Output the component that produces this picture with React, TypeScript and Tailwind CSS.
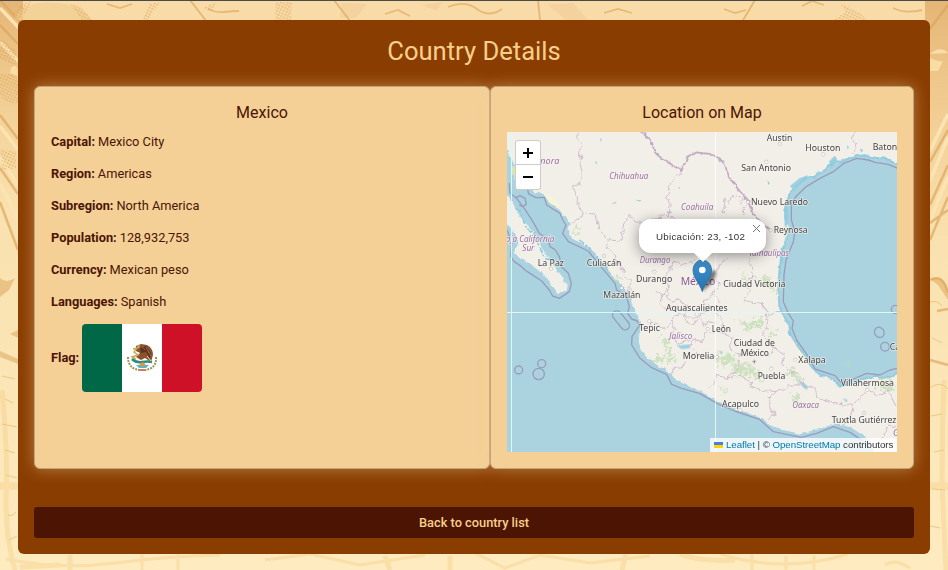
import React from "react";

type Place = { t: string; x: number; y: number; w: number; region?: boolean; dot?: [number, number] };

// Map drawing units are thirds of a pixel.
const places: Place[] = [
  { t: "Chihuahua", x: 328, y: 162, w: 117, region: true },
  { t: "Sonora", x: 92, y: 117, w: 86, region: true },
  { t: "Baja California", x: 3, y: 350, w: 160, region: true },
  { t: "Sur", x: 67, y: 379, w: 36, region: true },
  { t: "Coahuila", x: 543, y: 254, w: 97, region: true },
  { t: "Durango", x: 419, y: 413, w: 92, region: true },
  { t: "Tamaulipas", x: 746, y: 392, w: 121, region: true },
  { t: "Jalisco", x: 508, y: 643, w: 69, region: true },
  { t: "Oaxaca", x: 877, y: 849, w: 80, region: true },
  { t: "Austin", x: 800, y: 47, w: 77, dot: [839, 57] },
  { t: "Houston", x: 916, y: 78, w: 105, dot: [970, 88] },
  { t: "Baton Rouge", x: 1118, y: 74, w: 160 },
  { t: "San Antonio", x: 724, y: 138, w: 149, dot: [799, 110] },
  { t: "Nuevo Laredo", x: 753, y: 239, w: 171, dot: [744, 231] },
  { t: "Reynosa", x: 821, y: 325, w: 102, dot: [812, 316] },
  { t: "La Paz", x: 113, y: 422, w: 79, dot: [153, 431] },
  { t: "Culiacán", x: 260, y: 424, w: 104, dot: [312, 393] },
  { t: "Durango", x: 408, y: 470, w: 109, dot: [463, 440] },
  { t: "Mazatlán", x: 310, y: 519, w: 111, dot: [365, 489] },
  { t: "Ciudad Victoria", x: 670, y: 487, w: 186, dot: [763, 458] },
  { t: "Aguascalientes", x: 498, y: 557, w: 185, dot: [590, 568] },
  { t: "Tepic", x: 417, y: 619, w: 63, dot: [448, 589] },
  { t: "León", x: 635, y: 621, w: 58, dot: [623, 612] },
  { t: "Morelia", x: 548, y: 703, w: 95, dot: [650, 696] },
  { t: "Ciudad de", x: 701, y: 662, w: 124 },
  { t: "México", x: 722, y: 694, w: 85, dot: [763, 710] },
  { t: "Xalapa", x: 895, y: 713, w: 82, dot: [886, 704] },
  { t: "Puebla", x: 773, y: 762, w: 83, dot: [814, 731] },
  { t: "Villahermosa", x: 1022, y: 783, w: 160, dot: [1102, 794] },
  { t: "Acapulco", x: 666, y: 847, w: 111, dot: [721, 856] },
  { t: "Tuxtla Gutiérrez", x: 995, y: 893, w: 194, dot: [1092, 864] },
  { t: "Campeche", x: 1169, y: 676, w: 130 },
  { t: "Guatemala", x: 1179, y: 933, w: 130, region: true },
];

const coast =
  "M21 75 L32 95 45 130 48 185 62 192 80 190 108 203 130 205 150 235 178 254 195 275 215 295 203 312 205 330 225 345 270 368 300 405 330 445 365 480 388 512 395 530 404 550 408 568 420 588 428 605 414 640 422 672 450 705 475 722 510 740 525 765 570 785 600 798 644 825 704 850 784 880 824 910 904 927 964 910 1014 895 1060 912 1100 938 1130 990";
const gulf =
  "M1200 122 L1170 108 1150 97 1120 100 1094 90 1054 96 1024 110 1006 108 989 122 944 155 920 158 894 180 874 200 856 240 856 280 864 310 856 350 844 390 838 440 835 495 838 540 850 572 868 598 870 625 894 665 920 705 944 738 965 750 994 758 1020 785 1050 775 1085 762 1124 755 1155 760 1200 746";

const borders = [
  "M232 21 230 38 245 60 240 110 248 150 238 178 220 183 230 215 228 235 252 262 270 263 285 272 300 318 325 342 360 345 366 318 385 270 415 290 440 292 478 282 480 270 508 272",
  "M252 262 235 285 218 295",
  "M545 135 520 160 510 180 502 210 510 235 508 272 540 292",
  "M328 347 322 365 340 385 345 412 365 420 372 450 392 472 388 500",
  "M522 410 560 420 588 410 M522 410 500 450 510 480 488 512 470 505 M488 512 480 535 500 555 515 540 535 565 580 580 630 550 610 525 640 510 655 480 645 440 665 410 685 400",
  "M744 240 725 255 735 270 718 250 722 220 700 210 688 230 675 222 670 265",
  "M745 400 760 440 735 480 750 500 730 530 790 535 805 565 870 560",
  "M640 510 665 545 650 570 670 590 660 620 620 620 610 650 580 642 570 665 590 690 560 705 550 725 520 730 515 750",
  "M660 620 700 640 690 670 720 690 715 730 680 760 650 750 640 780 620 790",
  "M515 590 490 610 460 590 440 610 M535 565 515 590 530 620 510 640 540 655 570 645",
  "M500 505 510 525 540 520 560 550 550 580 580 600 600 575 610 600 645 590",
  "M720 690 765 680 810 690 825 670 790 630 805 590 790 535",
  "M825 670 850 690 845 720 870 740 895 750 910 780 940 790 950 815 990 830 1060 842 1100 795",
  "M680 760 720 750 750 775 780 795 830 800 865 780 910 780 M830 800 805 820 815 850 825 870 800 885",
  "M1060 842 1050 880 1030 900 M1100 795 1140 810 1165 795 1190 850 M1190 904 1165 904 1144 945",
  "M1065 21 1060 50 1070 70 1058 88",
];

const greens = [
  "M460 700 480 692 500 701 522 697 520 712 490 708 468 712Z",
  "M485 640 500 645 510 665 520 695 505 685 495 665Z",
  "M212 318 236 308 238 315 220 323Z",
  "M345 460 358 455 360 466 350 475Z",
  "M792 448 812 460 818 485 836 495 810 498 795 475Z",
  "M730 438 739 455 742 468 730 455Z",
  "M715 590 735 583 748 600 770 580 792 587 785 606 760 602 748 615Z",
  "M810 626 825 618 822 638 805 650Z",
  "M650 680 672 695 690 683 710 700 695 717 668 713 655 725Z",
  "M697 720 730 718 742 735 728 762 700 742Z",
  "M740 710 760 728 775 752 792 762 768 768 748 738Z",
  "M862 738 880 732 898 755 910 775 882 765Z",
  "M878 812 900 810 896 828 910 845 886 835Z",
  "M665 785 678 793 672 805Z",
  "M1120 780 1160 765 1185 790 1170 800 1140 788Z",
  "M1035 710 1050 718 1045 726Z",
];

const waters = [
  "M530 662 570 658 568 670 545 672Z", "M285 108 291 112 289 120Z", "M335 237 350 228 345 236Z",
  "M405 224 424 226 420 230Z", "M652 100 666 105 658 112Z", "M802 166 810 174 805 180Z",
  "M300 40 306 44 302 50Z", "M470 85 475 90 471 96Z", "M535 185 541 188 537 193Z",
  "M893 763 920 780 922 795 910 788Z", "M1028 820 1042 824 1040 833Z", "M655 677 668 680 664 687Z",
  "M1040 60 1047 67 1043 74Z", "M1080 70 1090 76 1083 83Z", "M870 183 898 160 925 150 910 170 880 196Z",
  "M986 110 1004 92 1012 102 995 122Z", "M842 370 853 363 849 415 842 412Z", "M852 250 864 247 866 298 854 303Z",
];

function MapTiles() {
  return (
    <svg className="block h-full w-full" viewBox="21 21 1170 960" aria-hidden="true">
      <defs>
        <filter id="wiggle" x="0" y="0" width="1200" height="1000" filterUnits="userSpaceOnUse">
          <feTurbulence type="fractalNoise" baseFrequency="0.045" numOctaves="3" seed="4" />
          <feDisplacementMap in="SourceGraphic" scale="24" xChannelSelector="R" yChannelSelector="G" />
        </filter>
        <filter id="shore" x="0" y="0" width="1200" height="1000" filterUnits="userSpaceOnUse">
          <feTurbulence type="fractalNoise" baseFrequency="0.06" numOctaves="2" seed="9" />
          <feDisplacementMap in="SourceGraphic" scale="13" xChannelSelector="R" yChannelSelector="G" />
        </filter>
        <filter id="patches" x="0" y="0" width="1200" height="1000" filterUnits="userSpaceOnUse">
          <feTurbulence type="fractalNoise" baseFrequency="0.09" numOctaves="2" seed="2" />
          <feDisplacementMap in="SourceGraphic" scale="50" xChannelSelector="R" yChannelSelector="G" />
        </filter>
      </defs>
      <rect width="1200" height="1000" fill="#f2efe9" />
      <g filter="url(#shore)">
        <path d={`${coast} V1010 H-20 V50Z`} fill="#aad3df" />
        <path d={`${gulf} H1230 V122Z`} fill="#aad3df" />
        <path d="M0 200 21 213 38 230 50 262 75 292 100 320 118 350 133 382 150 398 155 415 175 440 190 458 203 480 200 497 175 507 162 488 138 455 110 432 72 405 42 386 55 350 45 325 21 300 0 290Z" fill="#f2efe9" />
        <path d="M48 250 65 270 80 310 103 325 100 338 120 365 132 395 155 405 M238 345 270 370 300 405 330 445" fill="none" stroke="#8cc9df" strokeWidth="5" strokeDasharray="18 5 7 6" />
        <path d={gulf} fill="none" stroke="#93cbdf" strokeWidth="6" />
      </g>
      <path d="M1191 0H1230V1000H1191Z" fill="#aad3df" />
      <path d="M33 125 47 123 46 148 34 150Z" fill="#dfe2b2" />
      <path d="M125 200 165 220 195 265 178 250 150 235Z M320 400 350 450 330 440Z M862 275 866 310 856 350Z M870 630 890 665 930 715 905 705Z" fill="#f4f3dc" />
      <g filter="url(#patches)">
        {greens.map((d, i) => (
          <path key={i} d={d} fill="#bad9a8" opacity=".65" stroke="#c6deb4" strokeWidth="5" strokeDasharray="5 8" />
        ))}
      </g>
      {waters.map((d, i) => (
        <path key={i} d={d} fill="#8ecbe0" opacity=".85" />
      ))}
      <g fill="none" stroke="#ccb4c8" strokeWidth="2.6" strokeLinejoin="round" filter="url(#wiggle)">
        {borders.map((d, i) => (
          <path key={i} d={d} />
        ))}
      </g>
      <path d="M425 21 455 50 465 82 490 105 545 135 563 96 590 82 640 88 668 110 690 160 720 200 744 228 757 262 790 300 812 316" fill="none" stroke="#bda3bf" strokeWidth="5.5" strokeLinejoin="round" opacity=".9" filter="url(#shore)" />
      {/* maritime limits */}
      <g fill="none" stroke="#989dbc" strokeWidth="4" strokeLinejoin="round" strokeLinecap="round">
        <path d="M28 175 30 205 48 218 60 212 75 220 79 238 68 245 58 240 M48 218 75 253 100 292 118 325 145 345 150 365 166 375 178 395 185 425 205 445 214 475 208 500 178 520 158 513 148 495 125 468 95 448 75 435 65 425 43 410 32 395 35 350 21 315" />
        <path d="M82 190 86 207 108 218 133 217 140 240 180 265 188 285 198 300 188 325 205 350 265 378 290 410 320 445 345 475 350 495 378 510 388 545 383 565 395 582 412 588 418 602 396 635 395 660 420 700 455 728 500 748 515 778 545 790 600 806 652 836 704 858 780 884 820 920 904 937 950 925 1000 905 1050 922 1095 952" />
        <path d="M1200 133 1165 118 1125 112 1105 105 1070 100 1030 116 1000 140 960 160 920 184 890 212 874 235 874 285 885 320 880 350 858 405 852 450 850 530 865 565 880 588 876 610 890 645 925 695 945 732 1005 752 1024 774 1060 762 1100 745 1140 750 1170 735 1200 728" />
        <rect x="350" y="553" width="26" height="66" rx="13" transform="rotate(-39 363 586)" />
        <circle cx="56" cy="735" r="12" /><circle cx="125" cy="716" r="12" /><circle cx="116" cy="747" r="17" />
        <ellipse cx="1138" cy="622" rx="14" ry="16" transform="rotate(-35 1138 622)" /><circle cx="1155" cy="665" r="13" /><circle cx="1186" cy="553" r="12" />
      </g>
      <g fill="#c9c3c4">
        <path d="M113 743h6v8h-6z M353 578l7 5-3 4z M366 590l4 4-3 2z M374 601l4 4-3 2z" />
        <circle cx="34" cy="564" r="7" />
      </g>
      <g fontFamily="'Noto Sans', sans-serif" strokeLinejoin="round" paintOrder="stroke" stroke="#f6f4f0" strokeOpacity=".7" strokeWidth="5">
        {places.map((p) => (
          <React.Fragment key={p.t + p.x}>
            {p.dot && <circle cx={p.dot[0]} cy={p.dot[1]} r="4.5" fill="#f8f6f2" stroke="#777" strokeWidth="2.2" />}
            <text
              x={p.x}
              y={p.y}
              textLength={p.w}
              lengthAdjust="spacingAndGlyphs"
              fontSize={p.region ? 26 : 28}
              fontStyle={p.region ? "italic" : "normal"}
              fill={p.region ? "#996fa0" : "#444"}
            >
              {p.t}
            </text>
          </React.Fragment>
        ))}
        <text x="542" y="479" textLength="104" lengthAdjust="spacingAndGlyphs" fontSize="31" fill="#8a5a91">México</text>
      </g>
      <circle cx="763" cy="710" r="2.5" fill="#555" />
      <path d="M34.5 21V981 M21 562.5H1191" stroke="#d7fafa" strokeWidth="3" />
      <path d="M646.5 21V981" stroke="#fff" strokeWidth="3" opacity=".75" />
    </svg>
  );
}

function ParchmentBackground() {
  return (
    <svg className="absolute inset-0 h-full w-full" viewBox="0 0 948 570" preserveAspectRatio="none" aria-hidden="true">
      <defs>
        <linearGradient id="paper" x2="0" y2="1">
          <stop stopColor="#f8dba7" />
          <stop offset=".45" stopColor="#fae2b0" />
          <stop offset="1" stopColor="#feebc0" />
        </linearGradient>
        <linearGradient id="edge" x2="0" y2="1">
          <stop stopColor="#dda762" stopOpacity=".75" />
          <stop offset="1" stopColor="#efc47f" stopOpacity="0" />
        </linearGradient>
        <pattern id="dots" width="3" height="3" patternUnits="userSpaceOnUse" patternTransform="rotate(25)">
          <rect width="1.5" height="1.5" fill="#d0954a" opacity=".6" />
        </pattern>
        <filter id="ink" x="0" y="0" width="948" height="570" filterUnits="userSpaceOnUse">
          <feGaussianBlur stdDeviation=".7" />
        </filter>
      </defs>
      <rect width="948" height="570" fill="url(#paper)" />
      <g filter="url(#ink)">
        <rect x="-5" y="-5" width="28" height="215" fill="url(#edge)" />
        <rect x="925" y="-5" width="28" height="255" fill="url(#edge)" />
        <path d="M0 8 20 29 M0 42 18 61 M0 126 18 150 M0 157 18 186 M0 183 18 219 M948 114 930 151 M948 137 930 181 M948 177 930 220" fill="none" stroke="#fbe4b2" strokeWidth="3.5" />
        <g fill="none" stroke="#d9a35a" strokeWidth="2.5" opacity=".65">
          <path d="M0 0 22 24 M0 25 18 44 M0 115 18 139 M0 168 18 194 M0 202 18 250 M948 5 928 31 M948 130 930 162 M948 165 930 205 M948 197 930 240 M930 223 948 210 M930 280Q943 273 948 293 M937 311 948 309 M930 360 948 365" />
          <path d="M190 0 207 22 M755 0 742 22 M538 0 540 20 M334 0 350 21" strokeWidth="1.8" />
        </g>
        <path d="M15 16Q28 0 55 3Q82 4 92 20H15Z" fill="#f0cd8e" opacity=".65" />
        <path d="M342 3 367 4 356 18H340Z M548 5 573 3 588 20H566Z M422 5 442 2 437 11Z" fill="#dfa26b" opacity=".16" />
        <path d="M11 68Q18 61 18 76L10 73Z M930 58Q939 62 943 61L938 71H930Z M930 54Q940 45 948 53" fill="#f9dda7" />
        <path d="M208 9Q216 13 224 12T239 11 M107 4 120 8 132 4 M385 14 398 10 410 16 M448 7Q465 0 477 9T502 9 M604 13 618 9 632 13 M724 9 735 13 746 10 M893 8Q905 14 922 10 M802 6 812 1 824 5" fill="none" stroke="#dea65b" strokeWidth="1.8" opacity=".65" />
        <path d="M0 278Q6 284 15 278L9 290 0 297Z M10 334 18 330V338Z M0 357 18 364V359L0 351Z M930 279Q948 272 948 300L938 285Z" fill="#dda85e" opacity=".55" />
        <path d="M2 376 15 379 M5 399 13 403 M2 424 17 427 M5 450 15 453 M6 475 17 478 M8 515Q12 517 16 512 M9 540 17 536 M930 302Q938 300 942 306 M932 338 942 343 M930 388Q940 380 948 389 M931 416 942 414 M934 452 944 450 M932 489 945 490 M930 526 940 528" fill="none" stroke="#e6b96c" opacity=".7" />
        <g fill="none" stroke="#f2c67b" opacity=".34">
          <path d="M2 390Q8 450 6 500Q6 540 15 570 M944 380Q942 430 942 480Q944 530 946 570" strokeWidth="5" />
          <path d="M-5 486H18 M930 486H955" strokeWidth="7" />
          <path d="M6 559Q60 570 115 563T220 555 M142 553V570 M178 553V570 M265 560 310 554 360 565 425 555 M475 553 505 568 540 555 590 563 650 556 M720 554Q785 574 848 554 M752 553V570 M786 556V570 M814 555V570 M885 565Q895 558 910 568" strokeWidth="3" />
          <path d="M20 567 60 565 M70 555V570 M385 556 390 570 M450 556V570 M626 554 622 570 M680 554Q700 562 735 560" strokeWidth="5" />
        </g>
      </g>
      <path d="M13 16Q18 3 32 1L26 12 17 20Z M70 4 80 6 92 20H82Z M150 4 160 2 148 20H142Z M276 2 292 2 291 20H275Z M203 8 218 1 210 12Z M840 3Q855 8 868 20H833L846 12Z M0 38 16 50V66L0 58Z M0 74Q18 72 18 84V103Q8 105 0 96Z M0 150 16 151V168L3 170Z" fill="url(#dots)" />
      <rect width="948" height="1" fill="#494a4d" />
    </svg>
  );
}

function MexicoFlag() {
  return (
    <svg className="h-[68px] w-[120px] rounded" viewBox="0 0 120 68" aria-label="Mexico flag">
      <path d="M0 0h40v68H0z" fill="#006847" />
      <path d="M40 0h40v68H40z" fill="#fff" />
      <path d="M80 0h40v68H80z" fill="#ce1126" />
      <g transform="translate(30 0)">
        <path d="M16 33Q16 46 30 46Q45 46 44 33" fill="none" stroke="#9b9557" strokeWidth="2" strokeDasharray="2 1" />
        <path d="M24 22 29 20 35 21Q41 24 41 31L39 38 33 34 29 36 24 33 28 29 24 27Z" fill="#8b532d" />
        <path d="M28 24 34 22 39 29 38 35 34 28 29 29Z" fill="#5c3426" />
        <path d="M30 22 33 26 M34 23 37 29 M36 27 39 32" stroke="#b07a49" strokeWidth=".7" />
        <path d="M21 25 25 24 22 28 26 31 20 33 24 35" fill="none" stroke="#c6ae58" strokeWidth="1.5" />
        <path d="M25 22 28 21 27 25Z" fill="#d8b067" />
        <path d="M20 35Q24 39 30 38T40 38" fill="none" stroke="#2d8b83" strokeWidth="2.5" />
        <path d="M24 41H37L34 44H27Z" fill="#53b9ca" />
        <path d="M27 40 31 38 34 41 30 43Z" fill="#e09343" />
        <path d="M28 46H33" stroke="#d7796d" strokeWidth="2" />
        <path d="M35 32 39 37" stroke="#e8d7b8" />
      </g>
    </svg>
  );
}

function MarkerIcon() {
  return (
    <svg className="absolute left-[182px] top-[126px] h-[36px] w-[42px]" viewBox="0 0 42 36" aria-hidden="true">
      <defs>
        <linearGradient id="pin" x2="0" y2="1">
          <stop stopColor="#3c91cc" />
          <stop offset="1" stopColor="#2573b1" />
        </linearGradient>
        <filter id="pinShade" x="-50%" y="-50%" width="200%" height="200%">
          <feGaussianBlur stdDeviation="1.8" />
        </filter>
      </defs>
      <path d="M14 31 17 20Q23 10 27 13Q28 22 14 33Z" opacity=".5" filter="url(#pinShade)" />
      <path d="M13.300 33.500C10.500 25 4 20 4 12A9.300 10 0 0 1 22.600 12C22.600 20 16 25 13.300 33.500Z" fill="url(#pin)" stroke="#2e6c97" strokeWidth=".8" />
      <circle cx="13.300" cy="12" r="3.300" fill="#fff" />
    </svg>
  );
}

function LeafletMap() {
  return (
    <div className="relative h-80 w-full overflow-hidden bg-[#aad3df] font-['Liberation_Sans',sans-serif]">
      <MapTiles />
      <MarkerIcon />
      <div className="absolute left-2 top-2 flex w-[26px] flex-col rounded-[3px] border border-black/20 bg-white text-black">
        <button className="flex h-6 items-center justify-center border-b border-[#ccc]" aria-label="Zoom in">
          <svg className="size-3" viewBox="0 0 12 12"><path d="M1 6H11M6 1V11" stroke="currentColor" strokeWidth="2" /></svg>
        </button>
        <button className="flex h-6 items-center justify-center" aria-label="Zoom out">
          <svg className="size-3" viewBox="0 0 12 12"><path d="M1 6H11" stroke="currentColor" strokeWidth="2" /></svg>
        </button>
      </div>
      <div className="absolute left-[132px] top-[87px] h-[34px] w-[127px] rounded-xl bg-white shadow-[0_3px_14px_rgba(0,0,0,0.4)]">
        <p className="whitespace-nowrap pl-[17px] pt-[10px] text-[9.75px] leading-[15px] tracking-[0.27px] text-[#333]">Ubicación: 23, -102</p>
        <svg className="absolute right-[5px] top-[5px] size-[9px] text-[#757575]" viewBox="0 0 9 9"><path d="M1 1 8 8M8 1 1 8" stroke="currentColor" /></svg>
        <svg className="absolute left-[55px] top-[34px] h-[9px] w-[18px]" viewBox="0 0 18 9"><path d="M0 0H18L9 9Z" fill="#fff" /></svg>
      </div>
      <div className="absolute bottom-0 right-0 flex h-[14px] w-[187px] items-center whitespace-pre bg-white/80 pl-1 text-[9.75px] leading-[14px] tracking-[-0.06px] text-[#333]">
        <svg className="mr-[3px] h-[6px] w-[9px] shrink-0" viewBox="0 0 9 6"><path d="M0 0H9V3H0Z" fill="#4c7be1" /><path d="M0 3H9V6H0Z" fill="#ffd500" /></svg>
        <span className="text-[#0078a8]">Leaflet</span>
        <span> | © </span>
        <span className="text-[#0078a8]">OpenStreetMap</span>
        <span> contributors</span>
      </div>
    </div>
  );
}

const details = [
  ["Capital", "Mexico City"],
  ["Region", "Americas"],
  ["Subregion", "North America"],
  ["Population", "128,932,753"],
  ["Currency", "Mexican peso"],
  ["Languages", "Spanish"],
];

export default function App() {
  return (
    <div className="relative h-[570px] w-[948px] overflow-hidden px-[18px] pt-5 font-['Roboto',sans-serif]">
      <ParchmentBackground />
      <main className="relative flex h-[534px] flex-col rounded-md bg-[#8a3d00] px-4">
        <h1 className="h-[66px] pt-[15px] text-center text-[25.6px] leading-[32px] text-[#f9cf8b]">Country Details</h1>
        <div className="flex h-[383px] text-[#4b1403]">
          <section className="w-[456px] rounded-md border border-[#c1a57a] bg-[#f4d097] px-4 pt-4 shadow-[0_0_16px_rgba(244,208,151,0.45)]">
            <h2 className="mb-[9px] text-center text-base leading-5">Mexico</h2>
            <dl className="flex flex-col gap-3 text-[12.8px] leading-5">
              {details.map(([label, value]) => (
                <div key={label} className="flex gap-[3px]">
                  <dt className="font-bold">{label}:</dt>
                  <dd>{value}</dd>
                </div>
              ))}
              <div className="flex items-center gap-[3px]">
                <dt className="font-bold">Flag:</dt>
                <dd><MexicoFlag /></dd>
              </div>
            </dl>
          </section>
          <section className="w-[424px] rounded-md border border-[#c1a57a] bg-[#f4d097] px-4 pt-4 shadow-[0_0_16px_rgba(244,208,151,0.45)]">
            <h2 className="mb-[9px] text-center text-base leading-5">Location on Map</h2>
            <LeafletMap />
          </section>
        </div>
        <button className="mt-[38px] h-[31px] rounded-[3px] bg-[#4b1403] text-[12.8px] font-medium text-[#f9cf8b]">Back to country list</button>
      </main>
    </div>
  );
}
